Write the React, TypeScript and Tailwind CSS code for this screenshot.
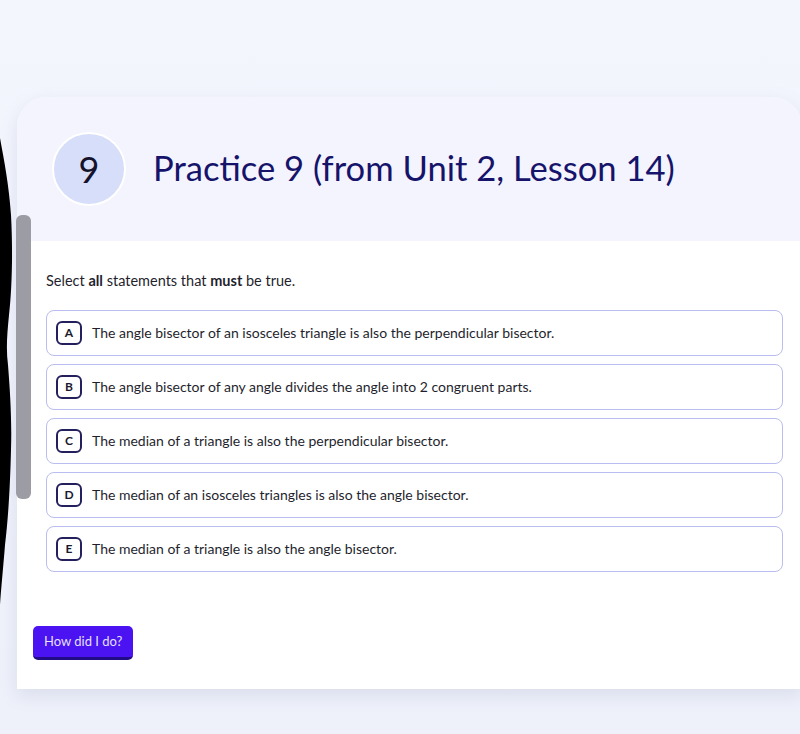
import React from 'react';

const options = [
  { key: 'A', text: 'The angle bisector of an isosceles triangle is also the perpendicular bisector.' },
  { key: 'B', text: 'The angle bisector of any angle divides the angle into 2 congruent parts.' },
  { key: 'C', text: 'The median of a triangle is also the perpendicular bisector.' },
  { key: 'D', text: 'The median of an isosceles triangles is also the angle bisector.' },
  { key: 'E', text: 'The median of a triangle is also the angle bisector.' },
];

export default function App() {
  return (
    <div className="relative h-[734px] w-[800px] overflow-hidden bg-gradient-to-b from-[#f4f6fe] to-[#eef1fa] font-['Lato',sans-serif]">
      {/* black edge on the left */}
      <svg className="absolute left-0 top-0 z-20" width="20" height="734" viewBox="0 0 20 734">
        <path
          d="M0 138 C4 160 9 185 11 215 C13 250 12 290 9 315 C7 335 6 350 8 365 C10 390 12 420 11 450 C10 490 8 520 5 545 C3 570 1 590 0 605 Z"
          fill="#000"
        />
      </svg>

      {/* scrollbar thumb */}
      <div className="absolute left-[16px] top-[215px] z-30 h-[284px] w-[15px] rounded-[6px] bg-[#9c9da4]" />

      <div className="pt-[97px]">
        <div className="ml-[17px] w-[785px] overflow-hidden rounded-t-[30px] bg-white shadow-[0_6px_18px_rgba(120,130,170,0.18)]">
          <div className="flex h-[144px] items-center bg-[#f3f4fd] pl-[35px]">
            <div className="flex h-[74px] w-[74px] items-center justify-center rounded-full border-2 border-white bg-[#d7def9] text-[36px] text-[#14132b]">
              9
            </div>
            <h1 className="-mt-[3px] ml-[27px] text-[34.6px] font-normal text-[#16136b]">
              Practice 9 (from Unit 2, Lesson 14)
            </h1>
          </div>

          <div className="px-[16px] pb-[29px] pt-[29px]">
            <div className="pl-[13px] pr-[3px]">
              <p className="text-[14.5px] text-[#1f1f2e]">
                Select <span className="font-bold">all</span> statements that <span className="font-bold">must</span> be true.
              </p>
              <div className="mt-[18px] flex flex-col gap-[8px]">
                {options.map((o) => (
                  <div
                    key={o.key}
                    className="flex h-[46px] items-center rounded-[8px] border border-[#b9bdf0] pl-[9px]"
                  >
                    <span className="flex h-[24px] w-[26px] items-center justify-center rounded-[6px] border-2 border-[#24205e] text-[12px] font-bold text-[#1a1a2e]">
                      {o.key}
                    </span>
                    <span className="ml-[10px] text-[14px] text-[#1f1f2e]">{o.text}</span>
                  </div>
                ))}
              </div>
            </div>

            <button className="mt-[54px] h-[34px] rounded-[5px] border-b-[3px] border-[#210b86] bg-[#4b12f2] px-[11px] text-[13px] text-[#e4e0ff]">
              How did I do?
            </button>
          </div>
        </div>
      </div>
    </div>
  );
}
